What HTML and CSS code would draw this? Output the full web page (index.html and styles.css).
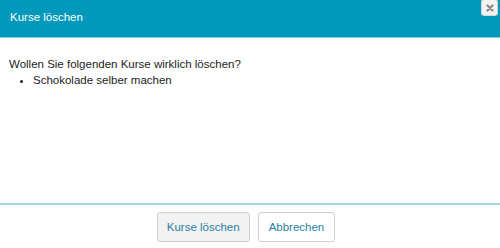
FILE: index.html
```html
<!DOCTYPE html>
<html lang="de">
<head>
    <meta charset="UTF-8">
    <title>Kurse löschen</title>
    <link rel="stylesheet" href="styles.css">
</head>
<body>
    <div class="dialog">
        <div class="dialog-header">
            <span class="dialog-title">Kurse löschen</span>
            <button class="close-btn" title="Schließen">
                <svg width="10" height="10" viewBox="0 0 10 10">
                    <path d="M2.5 2.5 L7.5 7.5 M7.5 2.5 L2.5 7.5" stroke="#8a8a8a" stroke-width="2.2" stroke-linecap="round"/>
                </svg>
            </button>
        </div>
        <div class="dialog-body">
            <p>Wollen Sie folgenden Kurse wirklich löschen?</p>
            <ul>
                <li>Schokolade selber machen</li>
            </ul>
        </div>
        <div class="dialog-footer">
            <button class="btn btn-primary">Kurse löschen</button>
            <button class="btn">Abbrechen</button>
        </div>
    </div>
</body>
</html>
```

FILE: styles.css
```css
body {
    margin: 0;
    font-family: 'Liberation Sans', Arial, sans-serif;
    background: #fff;
}

.dialog {
    width: 500px;
    height: 248px;
    display: flex;
    flex-direction: column;
}

.dialog-header {
    position: relative;
    height: 34px;
    background-color: #0099bb;
    border-bottom: 1px solid #7fd3e4;
    display: flex;
    align-items: center;
    padding: 0 0 3px 10px;
}

.dialog-title {
    color: #fff;
    font-size: 11.5px;
}

.close-btn {
    position: absolute;
    top: -1px;
    right: 2px;
    width: 17px;
    height: 17px;
    padding: 0;
    border: 1px solid #d6d6d6;
    border-radius: 3px;
    background-color: #f2f2f2;
    display: flex;
    align-items: center;
    justify-content: center;
}

.dialog-body {
    flex: 1;
    padding: 19px 9px 0;
    font-size: 11.5px;
    color: #222;
}

.dialog-body p {
    margin: 0;
    line-height: 15px;
}

.dialog-body ul {
    margin: 0;
    padding-left: 24px;
    line-height: 16px;
}

.dialog-footer {
    border-top: 2px solid #9ddbe8;
    height: 36px;
    display: flex;
    justify-content: center;
    align-items: flex-start;
    gap: 8px;
    padding: 7px 8px 0 0;
}

.btn {
    height: 30px;
    padding: 0 10px;
    border: 1px solid #cfcfcf;
    border-radius: 3px;
    background: #fff;
    color: #2b7fa6;
    font-family: 'Liberation Sans', Arial, sans-serif;
    font-size: 11.5px;
}

.btn-primary {
    background: #f2f2f2;
    padding: 0 9px;
}
```
